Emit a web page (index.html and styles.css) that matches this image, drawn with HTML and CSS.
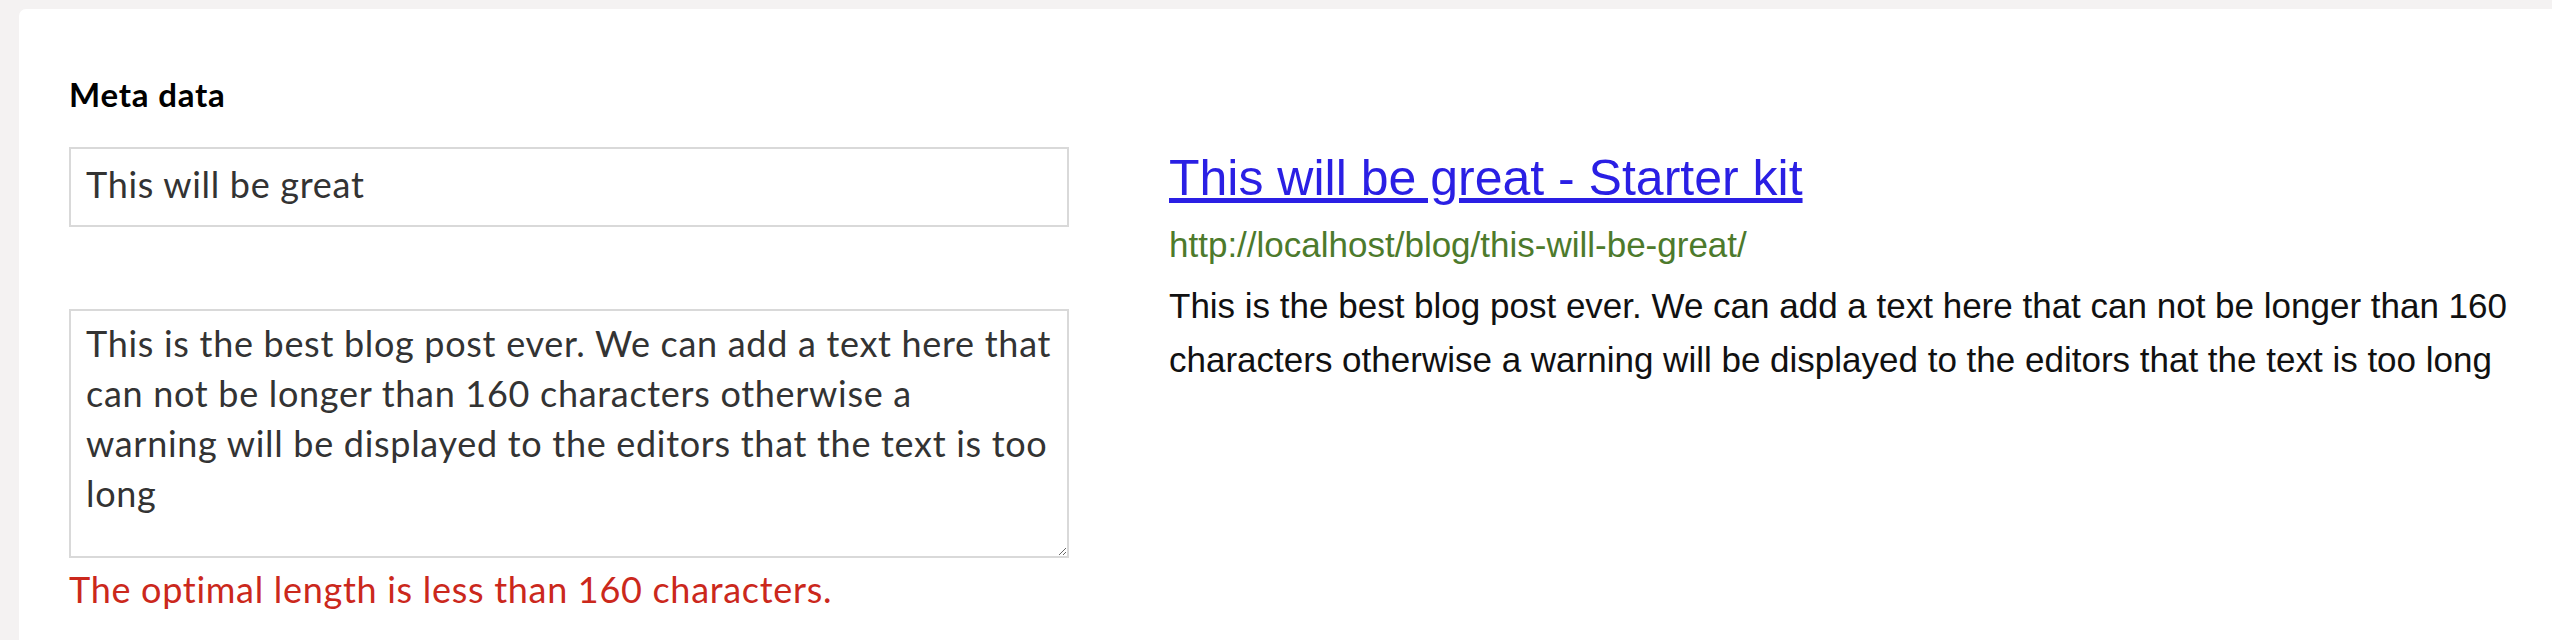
FILE: index.html
```html
<!DOCTYPE html>
<html lang="en">
<head>
<meta charset="utf-8">
<title>Meta data</title>
<link rel="stylesheet" href="styles.css">
</head>
<body>
<div class="page">
  <section class="card">
    <h2 class="card-title">Meta data</h2>
    <div class="row">
      <div class="fields">
        <input class="field-input" type="text" value="This will be great">
        <textarea class="field-textarea">This is the best blog post ever. We can add a text here that
can not be longer than 160 characters otherwise a
warning will be displayed to the editors that the text is too
long</textarea>
        <div class="field-error">The optimal length is less than 160 characters.</div>
      </div>
      <div class="preview">
        <div class="preview-title"><a href="#">This will be great - Starter kit</a></div>
        <div class="preview-url">http://localhost/blog/this-will-be-great/</div>
        <div class="preview-desc">This is the best blog post ever. We can add a text here that can not be longer than 160 characters otherwise a warning will be displayed to the editors that the text is too long</div>
      </div>
    </div>
  </section>
</div>
</body>
</html>
```

FILE: styles.css
```css
html, body {
  margin: 0;
  padding: 0;
  background: #f4f2f2;
}

.page {
  padding: 9px 0 0 19px;
  min-height: 640px;
  box-sizing: border-box;
  display: flex;
  flex-direction: column;
}

.card {
  flex: 1;
  background: #ffffff;
  border-radius: 7px 0 0 0;
  padding: 65px 20px 40px 50px;
  font-family: Lato, "Open Sans", sans-serif;
}

.card-title {
  margin: 0 0 33px 0;
  font-size: 33px;
  line-height: 40px;
  font-weight: 700;
  letter-spacing: 0.8px;
  color: #000;
}

.row {
  display: flex;
  gap: 100px;
  align-items: flex-start;
}

.fields {
  width: 1000px;
  flex: none;
  display: flex;
  flex-direction: column;
}

.field-input {
  display: block;
  width: 1000px;
  height: 80px;
  box-sizing: border-box;
  border: 2px solid #d9d9d9;
  border-radius: 0;
  padding: 0 15px 7px 15px;
  margin: 0;
  font-family: Lato, "Open Sans", sans-serif;
  font-size: 36px;
  letter-spacing: 0.7px;
  color: #333333;
  background: #fff;
  outline: none;
}

.field-textarea {
  display: block;
  width: 1000px;
  height: 249px;
  box-sizing: border-box;
  margin: 82px 0 0 0;
  border: 2px solid #d9d9d9;
  border-radius: 0;
  padding: 7px 4px 7px 15px;
  font-family: Lato, "Open Sans", sans-serif;
  font-size: 36px;
  line-height: 50px;
  letter-spacing: 0.7px;
  color: #333333;
  background: #fff;
  outline: none;
  overflow: hidden;
  white-space: pre-wrap;
}

.field-error {
  margin-top: 10px;
  font-size: 36px;
  line-height: 42px;
  letter-spacing: 0.7px;
  color: #cb281c;
}

.preview {
  flex: 1;
  min-width: 0;
  padding-top: 2px;
  font-family: "Liberation Sans", Arial, sans-serif;
}

.preview-title {
  font-size: 50px;
  line-height: 58px;
}

.preview-title a {
  color: #2a1fe4;
  text-decoration: underline;
}

.preview-url {
  margin-top: 18px;
  font-size: 35px;
  line-height: 40px;
  color: #4d7a2c;
}

.preview-desc {
  margin-top: 14px;
  font-size: 35px;
  line-height: 54px;
  color: #111111;
}
```
